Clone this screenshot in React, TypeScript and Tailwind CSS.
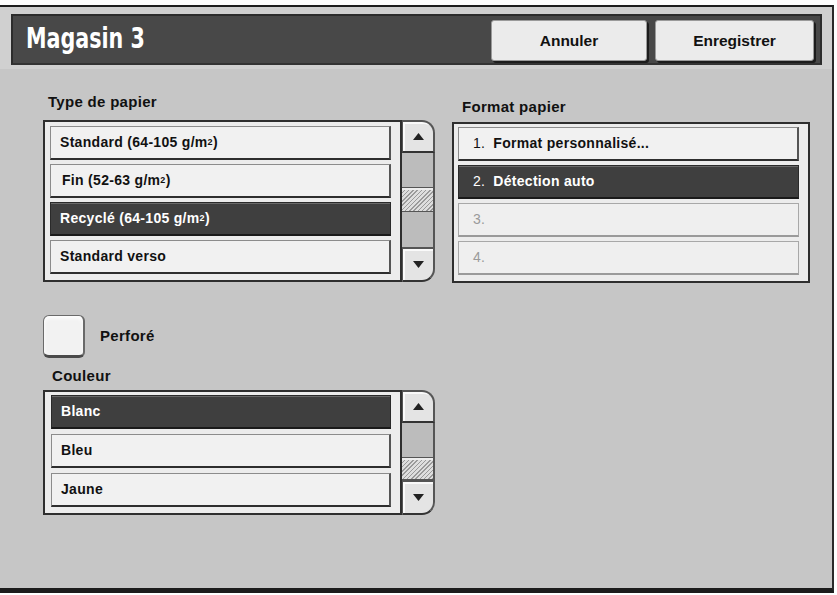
import React from "react";

const Sup2 = () => <sup className="text-[9px] relative -top-[1px]">2</sup>;

const Arrow = ({ down = false }: { down?: boolean }) => (
  <svg width="11" height="7" viewBox="0 0 11 7">
    {down ? (
      <polygon points="0,0 11,0 5.5,7" fill="#222" />
    ) : (
      <polygon points="0,7 11,7 5.5,0" fill="#222" />
    )}
  </svg>
);

interface ScrollBarProps {
  upH: number;
  trackA: number;
  thumbH: number;
  trackB: number;
  downH: number;
}

const ScrollBar: React.FC<ScrollBarProps> = ({ upH, trackA, thumbH, trackB, downH }) => (
  <div className="w-[33px] flex flex-col">
    <div
      className="flex items-center justify-center bg-[#e4e4e4] border-2 border-l border-[#555] border-b-[#333] rounded-tr-[13px] shadow-[inset_2px_2px_0_#fafafa]"
      style={{ height: upH }}
    >
      <Arrow />
    </div>
    <div className="bg-[#bcbcbc] border-r-2 border-[#555]" style={{ height: trackA }} />
    <div
      className="border-y border-r-2 border-[#555] bg-[repeating-linear-gradient(135deg,#9a9a9a_0px,#9a9a9a_1px,#dedede_1px,#dedede_3px)] shadow-[inset_0_2px_0_#eee]"
      style={{ height: thumbH }}
    />
    <div className="bg-[#bcbcbc] border-r-2 border-[#555]" style={{ height: trackB }} />
    <div
      className="flex items-center justify-center bg-[#e4e4e4] border-2 border-l border-[#555] border-b-[#333] rounded-br-[13px] shadow-[inset_2px_2px_0_#fafafa]"
      style={{ height: downH }}
    >
      <Arrow down />
    </div>
  </div>
);

const Row = ({
  children,
  selected = false,
  disabled = false,
  pl = "pl-[9px]",
}: {
  children: React.ReactNode;
  selected?: boolean;
  disabled?: boolean;
  pl?: string;
}) => {
  if (selected) {
    return (
      <div
        className={`h-[34px] flex items-center ${pl} bg-[#3f3f3f] border border-[#2a2a2a] border-b-2 border-b-[#1a1a1a] shadow-[inset_0_1px_0_#6a6a6a] text-white font-bold`}
      >
        {children}
      </div>
    );
  }
  if (disabled) {
    return (
      <div
        className={`h-[34px] flex items-center ${pl} bg-[#efefef] border border-[#a8a8a8] border-b-2 border-b-[#9a9a9a] text-[#9a9a9a]`}
      >
        {children}
      </div>
    );
  }
  return (
    <div
      className={`h-[34px] flex items-center ${pl} bg-[#f1f1f1] border border-[#8c8c8c] border-b-2 border-r-2 border-b-[#2e2e2e] border-r-[#555] text-[#111] font-bold`}
    >
      {children}
    </div>
  );
};

export default function App() {
  return (
    <div className="w-[837px] h-[595px] bg-white pt-[5px] font-['Liberation_Sans',Arial,sans-serif] text-[14px] tracking-[0.3px] text-[#111]">
      <div className="w-[834px] h-[588px] flex flex-col bg-[#c6c6c6] border-t-2 border-t-[#1e1e1e] border-r-2 border-r-[#2a2a2a] border-b-[5px] border-b-[#1c1c1c]">
        {/* Header */}
        <div className="pt-[7px] pb-[4px] pl-[11px] pr-[10px] bg-[#d0d0d0]">
          <div className="h-[51px] flex items-center pl-[13px] pr-[6px] bg-[#484848] border-2 border-[#2c2c2c] border-b-[#333]">
            <div className="w-[120px]">
              <div className="inline-block origin-left scale-x-[0.82] font-['DejaVu_Sans_Condensed','DejaVu_Sans',sans-serif] font-bold text-[28px] leading-none text-white tracking-normal whitespace-nowrap">
                Magasin 3
              </div>
            </div>
            <div className="ml-auto flex gap-[8px] pt-[2px]">
              <button className="w-[156px] h-[41px] bg-[#ebebeb] border border-[#9a9a9a] rounded-[3px] shadow-[2px_2px_0_#1c1c1c] text-[15.5px] font-bold tracking-normal text-[#111]">
                Annuler
              </button>
              <button className="w-[159px] h-[41px] bg-[#ebebeb] border border-[#9a9a9a] rounded-[3px] shadow-[2px_2px_0_#1c1c1c] text-[15.5px] font-bold tracking-normal text-[#111]">
                Enregistrer
              </button>
            </div>
          </div>
        </div>

        {/* Content */}
        <div className="flex pl-[43px] pt-[23px]">
          {/* Left column */}
          <div className="w-[392px] flex flex-col">
            <div className="h-[20px] leading-[20px] ml-[5px] mb-[8px] font-bold text-[15px]">Type de papier</div>
            <div className="flex">
              <div className="w-[359px] h-[162px] flex flex-col gap-[4px] pt-[4px] pl-[5px] pr-[9px] bg-[#ececec] border-2 border-[#2e2e2e]">
                <Row>
                  Standard (64-105 g/m<Sup2 />)
                </Row>
                <Row pl="pl-[11px]">
                  Fin (52-63 g/m<Sup2 />)
                </Row>
                <Row selected>
                  Recyclé (64-105 g/m<Sup2 />)
                </Row>
                <Row>Standard verso</Row>
              </div>
              <ScrollBar upH={33} trackA={34} thumbH={25} trackB={35} downH={35} />
            </div>

            <div className="flex items-center mt-[33px]">
              <div className="w-[42px] h-[43px] rounded-[6px] bg-[#f2f2f2] border border-[#6a6a6a] border-b-[3px] border-r-2 border-b-[#4a4a4a] shadow-[inset_0_2px_4px_#ffffff]" />
              <div className="ml-[15px] font-bold text-[15px]">Perforé</div>
            </div>

            <div className="h-[20px] leading-[20px] ml-[9px] mt-[8px] mb-[4px] font-bold text-[15px]">Couleur</div>
            <div className="flex">
              <div className="w-[359px] h-[125px] flex flex-col gap-[5px] pt-[3px] pl-[6px] pr-[9px] bg-[#ececec] border-2 border-[#2e2e2e]">
                <Row selected>Blanc</Row>
                <Row>Bleu</Row>
                <Row>Jaune</Row>
              </div>
              <ScrollBar upH={33} trackA={34} thumbH={23} trackB={0} downH={35} />
            </div>
          </div>

          {/* Right column */}
          <div className="ml-[17px] w-[358px] flex flex-col pt-[5px]">
            <div className="h-[20px] leading-[20px] ml-[10px] mb-[5px] font-bold text-[15px]">Format papier</div>
            <div className="h-[161px] flex flex-col gap-[4px] pt-[3px] pl-[4px] pr-[9px] bg-[#ececec] border-2 border-[#2e2e2e]">
              <Row pl="pl-[14px]">
                <span className="font-normal mr-[8px]">1.</span>Format personnalisé...
              </Row>
              <Row selected pl="pl-[14px]">
                <span className="font-normal mr-[8px]">2.</span>Détection auto
              </Row>
              <Row disabled pl="pl-[14px]">
                3.
              </Row>
              <Row disabled pl="pl-[14px]">
                4.
              </Row>
            </div>
          </div>
        </div>
      </div>
    </div>
  );
}
